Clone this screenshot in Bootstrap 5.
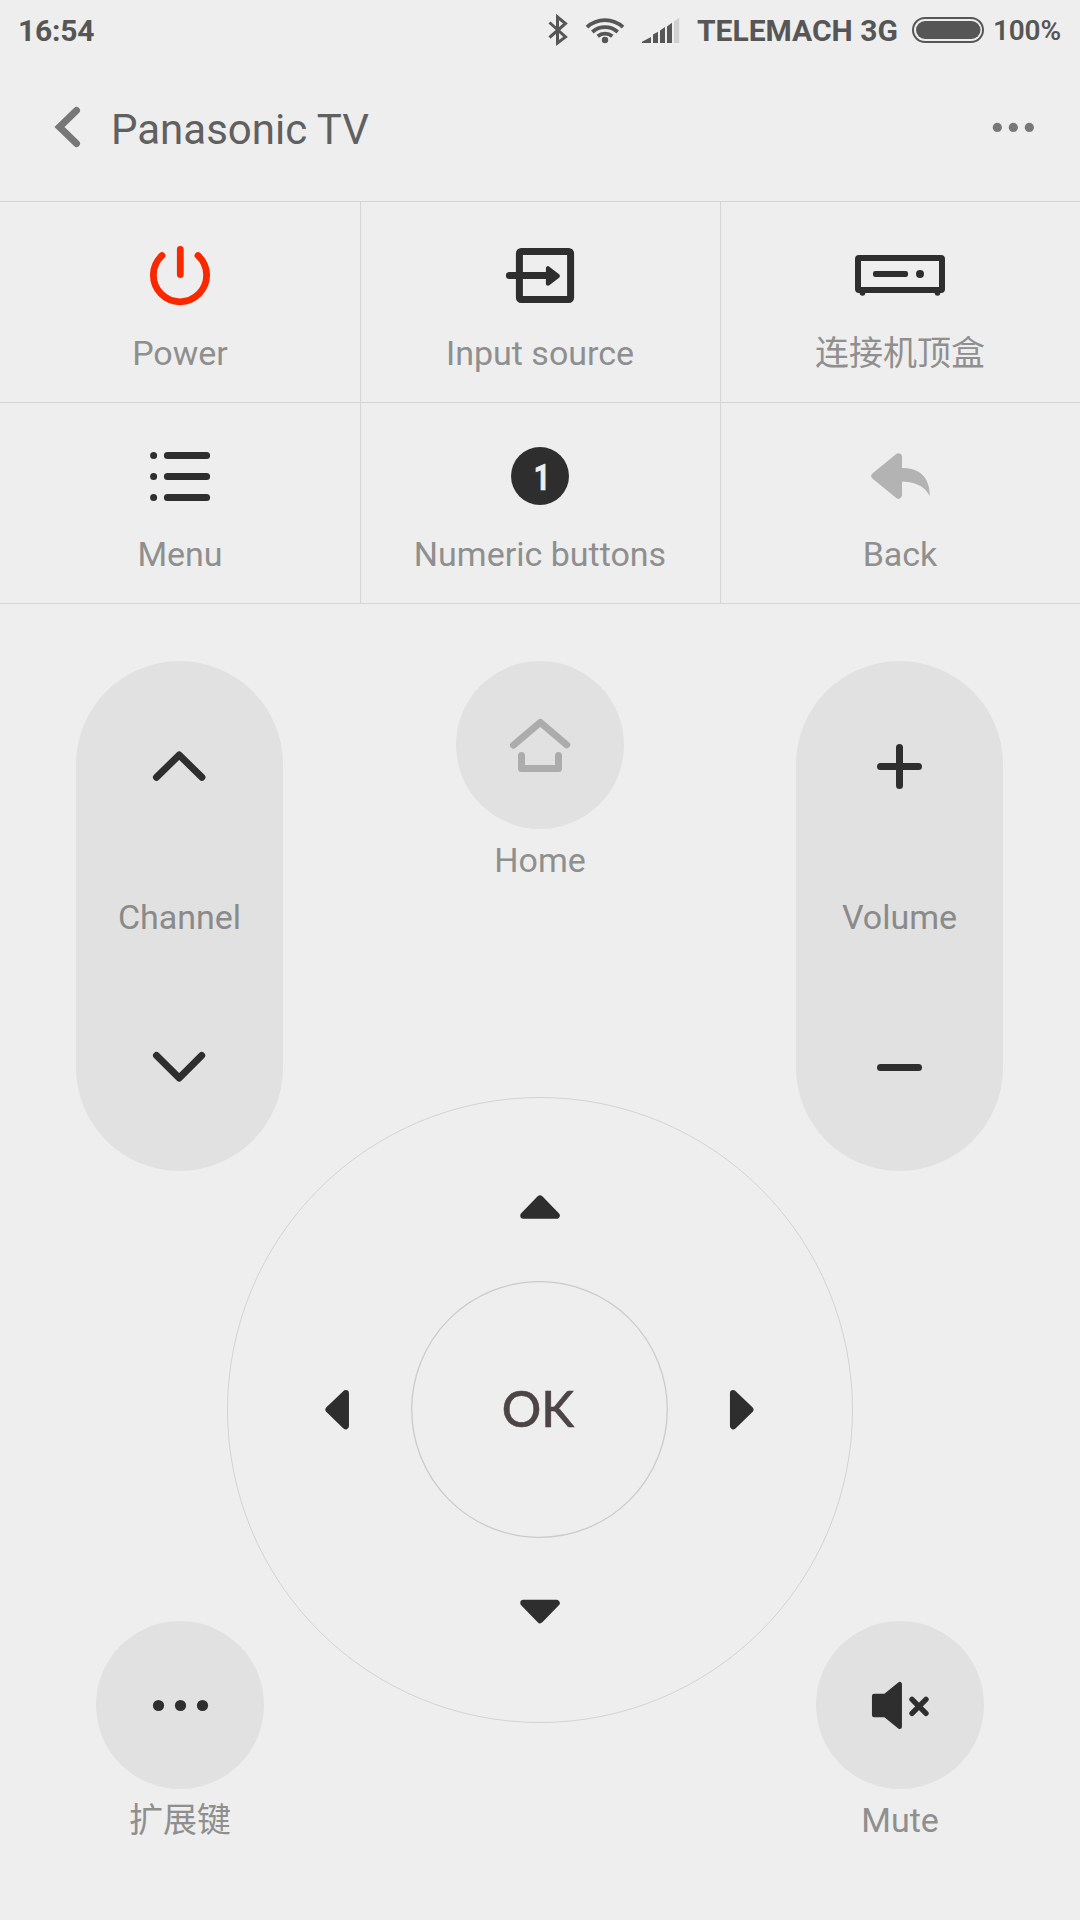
<!DOCTYPE html>
<html lang="en">
<head>
<meta charset="utf-8">
<meta name="viewport" content="width=device-width, initial-scale=1">
<title>Panasonic TV</title>
<link href="https://cdn.jsdelivr.net/npm/bootstrap@5.3.0/dist/css/bootstrap.min.css" rel="stylesheet">
<style>
  :root { --line: #d5d5d5; --pad: #e1e1e1; }
  body { background: #eee; font-family: Roboto, "Noto Sans CJK SC", sans-serif; color: #8f8f8f; }
  svg { display: block; flex: none; }
  .screen { width: 1080px; height: 1920px; overflow: hidden; }
  .statusbar { height: 60px; padding: 0 20px 0 18px; color: #565656; font-weight: 700; font-size: 30px; line-height: 61px; letter-spacing: -.2px; }
  .carrier { width: 226px; padding-left: 12px; font-size: 30px; letter-spacing: 0; white-space: nowrap; }
  .level { width: 67px; margin-left: 8px; font-size: 28px; font-weight: 600; white-space: nowrap; }
  .titlebar { height: 141px; padding: 0 40px 0 50px; color: #606060; }
  .titlebar h1 { font-size: 42px; line-height: 50px; font-weight: 400; margin: 45px 0 0 23px; }
  .key-cell { width: 360px; height: 201px; padding-top: 25px; box-shadow: inset 0 1px 0 var(--line); }
  .key-cell:not(:nth-child(3n+1)) { box-shadow: inset 1px 1px 0 var(--line); }
  .keys { width: 1080px; border-bottom: 1px solid var(--line); }
  .caption { font-size: 34px; line-height: 40px; white-space: nowrap; }
  .keys .caption { margin-top: 7px; }
  .btn { --bs-btn-color: #8f8f8f; --bs-btn-padding-x: 0; --bs-btn-padding-y: 0; --bs-btn-border-width: 0; --bs-btn-border-radius: 0; --bs-btn-font-family: inherit; }
  .remote { grid-template-columns: repeat(3, 360px); grid-template-rows: 436px 74px 450px 101px 198px; padding-top: 57px; }
  .rocker { grid-row: 1 / 3; width: 207px; height: 510px; margin-left: 76px; border-radius: 104px; background: var(--pad); color: #8a8a8a; }
  .knob { width: 168px; height: 168px; border-radius: 50%; background: var(--pad); }
  .round-key .caption { margin-top: 11px; }
  .home { grid-row: 1; }
  .col-left { grid-column: 1; }
  .col-mid { grid-column: 2; }
  .col-right { grid-column: 3; }
  .lower { grid-row: 4 / 6; }
  .dpad { grid-row: 2 / 5; grid-column: 1 / 4; justify-self: center; width: 626px; height: 626px; border: 1px solid #d3d3d3; border-radius: 50%; grid-template-columns: 183px 257px 184px; grid-template-rows: 183px 257px 184px; grid-template-areas: ". up ." "left ok right" ". down ."; }
  .dpad-up { grid-area: up; }
  .dpad-left { grid-area: left; }
  .dpad-right { grid-area: right; }
  .dpad-down { grid-area: down; }
  .okay { grid-area: ok; }
  .okay text { font-family: Lato, sans-serif; font-size: 50px; font-weight: 500; }
</style>
<script src="https://cdn.jsdelivr.net/npm/bootstrap@5.3.0/dist/js/bootstrap.bundle.min.js"></script>
</head>
<body>
<main class="screen">
  <header>
    <div class="statusbar d-flex align-items-center">
      <div class="me-auto">16:54</div>
      <svg width="140" height="60" viewBox="545 0 140 60">
        <path d="M549.5 22.5 565.5 37 557.5 43V17L565.5 23.5 549.5 37.5" fill="none" stroke="#565656" stroke-width="3"/>
        <g fill="none" stroke="#565656" stroke-width="3.8">
          <path d="M587 27.2a26.5 26.5 0 0 1 36 0"/><path d="M592.3 32a19 19 0 0 1 25.4 0"/><path d="M597.7 36.3a11.5 11.5 0 0 1 14.6 0"/>
        </g>
        <circle cx="605" cy="40" r="3.2" fill="#565656"/>
        <g fill="#565656"><path d="M642 43v-1.2l9-4.8v6z"/><path d="M653 43v-8.5l5-2.7V43z"/><path d="M660 43V30.5l5-3.500v16z"/><path d="M667 43V26.5l5-3.8V43z"/></g>
        <path d="M674 43V21.5l5.2-3.7V43z" fill="#d0d0d0"/>
      </svg>
      <div class="carrier">TELEMACH 3G</div>
      <svg width="74" height="28" viewBox="911 16 74 28"><rect x="913" y="18" width="70" height="24" rx="12" fill="none" stroke="#565656" stroke-width="2"/><rect x="916" y="21" width="64.5" height="18" rx="9" fill="#565656"/></svg>
      <div class="level">100%</div>
    </div>
    <div class="titlebar d-flex align-items-start">
      <svg width="38" height="90" viewBox="50 60 38 90"><path d="M76.5 110.5 59.5 127 76.5 143.5" fill="none" stroke="#777" stroke-width="7" stroke-linecap="round"/><path d="M55.2 127l5.5-5.2v10.4z" fill="#777"/></svg>
      <h1 class="me-auto">Panasonic TV</h1>
      <svg width="60" height="90" viewBox="980 60 60 90" fill="#777"><circle cx="997.3" cy="127.4" r="4.6"/><circle cx="1013.3" cy="127.4" r="4.6"/><circle cx="1029.3" cy="127.4" r="4.6"/></svg>
    </div>
  </header>

  <nav class="keys d-flex flex-wrap">
    <div class="key-cell d-flex flex-column align-items-center">
      <svg width="120" height="100" viewBox="120 226 120 100" fill="none" stroke="#f82800" stroke-width="6.8" stroke-linecap="round"><path d="M162 255.6a26.6 26.6 0 1 0 36 0M180.3 249.4v25.2"/></svg>
      <div class="caption">Power</div>
    </div>
    <div class="key-cell d-flex flex-column align-items-center">
      <svg width="120" height="100" viewBox="480 226 120 100" fill="none" stroke="#2e2e2e" stroke-width="7"><rect x="519.4" y="251.5" width="51.2" height="48" rx="1.8"/><path d="M509.4 275.6H550" stroke-linecap="round"/><path d="M548 268.3v15.4l9.8-7.7z" fill="#2e2e2e" stroke-width="4.2" stroke-linejoin="round"/></svg>
      <div class="caption">Input source</div>
    </div>
    <div class="key-cell d-flex flex-column align-items-center">
      <svg width="120" height="100" viewBox="840 226 120 100" fill="#2e2e2e"><rect x="858" y="258" width="84" height="32" rx="1" fill="none" stroke="#2e2e2e" stroke-width="6" stroke-linejoin="round"/><rect x="873" y="271" width="35" height="6" rx="2.2"/><circle cx="920" cy="274" r="4"/><circle cx="862.5" cy="293" r="2.8"/><circle cx="937.5" cy="293" r="2.8"/></svg>
      <div class="caption" lang="zh">连接机顶盒</div>
    </div>
    <div class="key-cell d-flex flex-column align-items-center">
      <svg width="120" height="100" viewBox="120 427 120 100" stroke="#2e2e2e" stroke-width="7" stroke-linecap="round"><path d="M153.6 455.5h.01M153.6 476.5h.01M153.6 497.5h.01M167.4 455.5h39.2M167.4 476.5h39.2M167.4 497.5h39.2"/></svg>
      <div class="caption">Menu</div>
    </div>
    <div class="key-cell d-flex flex-column align-items-center">
      <svg width="120" height="100" viewBox="480 427 120 100"><circle cx="540" cy="476" r="29" fill="#2e2e2e"/><text x="533.4" y="489.8" font-family="Roboto, sans-serif" font-size="37.5" font-weight="700" fill="#eee" stroke="#eee" stroke-width=".5" textLength="17" lengthAdjust="spacingAndGlyphs">1</text></svg>
      <div class="caption">Numeric buttons</div>
    </div>
    <div class="key-cell d-flex flex-column align-items-center">
      <svg width="120" height="100" viewBox="840 427 120 100" fill="#b3b3b3"><path d="M898.3 457 875 476 898.3 495z" stroke="#b3b3b3" stroke-width="7.4" stroke-linejoin="round"/><path d="M900 468c18-1 30 8 29.8 28-6-11-16-14.5-29.8-14.5z"/></svg>
      <div class="caption">Back</div>
    </div>
  </nav>

  <section class="remote d-grid">
    <div class="rocker col-left d-flex flex-column align-items-center">
      <svg width="207" height="236" viewBox="76 661 207 236" fill="none" stroke="#2e2e2e" stroke-width="7" stroke-linecap="round" stroke-linejoin="round"><path d="M156.5 777.3 179.2 755 201.9 777.3"/></svg>
      <div class="caption">Channel</div>
      <svg width="207" height="234" viewBox="76 937 207 234" fill="none" stroke="#2e2e2e" stroke-width="7" stroke-linecap="round" stroke-linejoin="round"><path d="M156.5 1055.5 179.2 1078 201.700 1055.500"/></svg>
    </div>
    <div class="home round-key col-mid d-flex flex-column align-items-center">
      <button class="btn knob"><svg width="168" height="168" viewBox="456 661 168 168" fill="none" stroke="#acacac" stroke-width="7" stroke-linecap="round" stroke-linejoin="round"><path d="M513.5 745.2 540.3 722.4 566.7 744.8M521.5 755.5v13h37v-13"/></svg></button>
      <div class="caption">Home</div>
    </div>
    <div class="rocker col-right d-flex flex-column align-items-center">
      <svg width="207" height="236" viewBox="796 661 207 236" stroke="#2e2e2e" stroke-width="7" stroke-linecap="round"><path d="M880.5 766.500h38M899.500 747.500v38"/></svg>
      <div class="caption">Volume</div>
      <svg width="207" height="234" viewBox="796 937 207 234" stroke="#2e2e2e" stroke-width="7" stroke-linecap="round"><path d="M880.5 1067.500h38"/></svg>
    </div>

    <div class="dpad d-grid">
      <svg class="dpad-up" width="257" height="183" viewBox="411 1098 257 183"><path d="M523.5 1215.6 540 1198.6 556.5 1215.6z" fill="#2e2e2e" stroke="#2e2e2e" stroke-width="6.5" stroke-linejoin="round"/></svg>
      <svg class="dpad-left" width="183" height="257" viewBox="228 1281 183 257"><path d="M345.7 1393.3 328.7 1409.7 345.7 1426.1z" fill="#2e2e2e" stroke="#2e2e2e" stroke-width="6.5" stroke-linejoin="round"/></svg>
      <button class="btn okay"><svg width="257" height="257" viewBox="411 1281 257 257"><circle cx="539.5" cy="1409.5" r="127.8" fill="none" stroke="#cbcbcb" stroke-width="1.3"/><text x="501.800" y="1426.700" fill="#4d4545" stroke="#4d4545" stroke-width=".5" textLength="72.500" lengthAdjust="spacingAndGlyphs">OK</text></svg></button>
      <svg class="dpad-right" width="184" height="257" viewBox="668 1281 184 257"><path d="M733.2 1393.3 750.2 1409.7 733.2 1426.1z" fill="#2e2e2e" stroke="#2e2e2e" stroke-width="6.5" stroke-linejoin="round"/></svg>
      <svg class="dpad-down" width="257" height="184" viewBox="411 1538 257 184"><path d="M523.5 1603 540 1620 556.5 1603z" fill="#2e2e2e" stroke="#2e2e2e" stroke-width="6.5" stroke-linejoin="round"/></svg>
    </div>

    <div class="lower round-key col-left d-flex flex-column align-items-center">
      <button class="btn knob"><svg width="168" height="168" viewBox="96 1621 168 168" fill="#2e2e2e"><circle cx="158.5" cy="1705.5" r="5.6"/><circle cx="180.5" cy="1705.5" r="5.6"/><circle cx="202.5" cy="1705.5" r="5.6"/></svg></button>
      <div class="caption" lang="zh">扩展键</div>
    </div>
    <div class="lower round-key col-right d-flex flex-column align-items-center">
      <button class="btn knob"><svg width="168" height="168" viewBox="816 1621 168 168" fill="#2e2e2e" stroke="#2e2e2e" stroke-linejoin="round" stroke-linecap="round"><path d="M874.2 1696h11l14.5-11.8v42.5l-14.5-11.8h-11z" stroke-width="4.5"/><path d="M912 1699.3l14 14M926 1699.3l-14 14" stroke-width="5.4" fill="none"/></svg></button>
      <div class="caption">Mute</div>
    </div>
  </section>
</main>
</body>
</html>
